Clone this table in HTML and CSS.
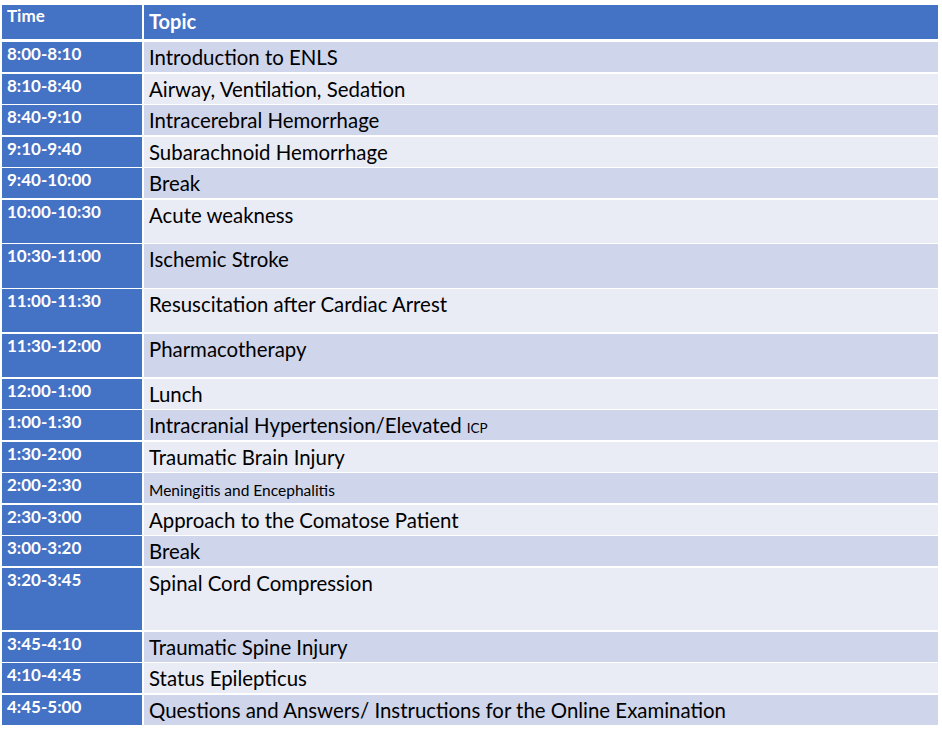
FILE: index.html
```html
<!DOCTYPE html>
<html>
<head>
<meta charset="utf-8">
<link rel="stylesheet" href="styles.css">
</head>
<body>
<div class="schedule">
  <div class="row head"><div class="time">Time</div><div class="topic">Topic</div></div>
  <div class="rows">
    <div class="row"><div class="time">8:00-8:10</div><div class="topic">Introduction to ENLS</div></div>
    <div class="row"><div class="time">8:10-8:40</div><div class="topic">Airway, Ventilation, Sedation</div></div>
    <div class="row"><div class="time">8:40-9:10</div><div class="topic">Intracerebral Hemorrhage</div></div>
    <div class="row"><div class="time">9:10-9:40</div><div class="topic">Subarachnoid Hemorrhage</div></div>
    <div class="row"><div class="time">9:40-10:00</div><div class="topic">Break</div></div>
    <div class="row tall"><div class="time">10:00-10:30</div><div class="topic">Acute weakness</div></div>
    <div class="row tall"><div class="time">10:30-11:00</div><div class="topic">Ischemic Stroke</div></div>
    <div class="row tall"><div class="time">11:00-11:30</div><div class="topic">Resuscitation after Cardiac Arrest</div></div>
    <div class="row tall"><div class="time">11:30-12:00</div><div class="topic">Pharmacotherapy</div></div>
    <div class="row"><div class="time">12:00-1:00</div><div class="topic">Lunch</div></div>
    <div class="row"><div class="time">1:00-1:30</div><div class="topic">Intracranial Hypertension/Elevated <span class="small">ICP</span></div></div>
    <div class="row"><div class="time">1:30-2:00</div><div class="topic">Traumatic Brain Injury</div></div>
    <div class="row"><div class="time">2:00-2:30</div><div class="topic"><span class="mini">Meningitis and Encephalitis</span></div></div>
    <div class="row"><div class="time">2:30-3:00</div><div class="topic">Approach to the Comatose Patient</div></div>
    <div class="row"><div class="time">3:00-3:20</div><div class="topic">Break</div></div>
    <div class="row xtall"><div class="time">3:20-3:45</div><div class="topic">Spinal Cord Compression</div></div>
    <div class="row"><div class="time">3:45-4:10</div><div class="topic">Traumatic Spine Injury</div></div>
    <div class="row"><div class="time">4:10-4:45</div><div class="topic">Status Epilepticus</div></div>
    <div class="row"><div class="time">4:45-5:00</div><div class="topic">Questions and Answers/ Instructions for the Online Examination</div></div>
  </div>
</div>
</body>
</html>
```
FILE: styles.css
```css
html, body {
  margin: 0;
  padding: 0;
  background: #ffffff;
}
body {
  padding: 5px 4px 0 2px;
  font-family: Lato, "Liberation Sans", sans-serif;
}
.schedule {
  display: flex;
  flex-direction: column;
  gap: 3.5px;
  width: 936px;
}
.rows {
  display: flex;
  flex-direction: column;
  gap: 1.5px;
}
.row {
  display: grid;
  grid-template-columns: 139.5px 1fr;
  column-gap: 2.5px;
  height: 30px;
}
.row.tall { height: 43.25px; }
.row.xtall { height: 62.5px; }
.row.head { height: 33.5px; }
.time {
  background: #4472C4;
  color: #ffffff;
  font-weight: bold;
  font-size: 17px;
  line-height: 20px;
  padding: 2px 0 0 5px;
}
.topic {
  color: #000000;
  font-size: 20.4px;
  line-height: 24px;
  padding: 3px 0 0 5px;
}
.rows .row:nth-child(odd) .topic { background: #CFD5EA; }
.rows .row:nth-child(even) .topic { background: #E9EBF5; }
.row.head .topic {
  background: #4472C4;
  color: #ffffff;
  font-weight: bold;
  font-size: 20px;
  padding-top: 4px;
}
.row.head .time {
  padding-top: 1px;
}
.small { font-size: 13.5px; }
.mini { font-size: 15.5px; }
```
